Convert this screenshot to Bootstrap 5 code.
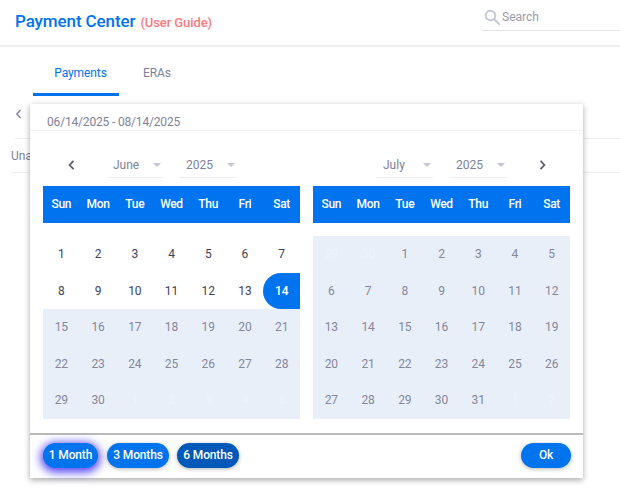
<!DOCTYPE html>
<html lang="en">
<head>
<meta charset="utf-8">
<title>Payment Center</title>
<link href="https://cdn.jsdelivr.net/npm/bootstrap@5.3.0/dist/css/bootstrap.min.css" rel="stylesheet">
<style>
html,body{height:100%;overflow:hidden}
body{font-family:Roboto,sans-serif;background:#fff;position:relative;width:620px;height:502px;color:#7e8299}
.topbar{height:47px;border-bottom:2px solid #eceef4;padding:0 0 0 15px}
.pc-head{padding-top:10px}
.pc-title{font-size:17px;letter-spacing:-.1px;font-weight:500;color:#0073ee;line-height:22px}
.pc-guide{font-size:13px;letter-spacing:-.1px;font-weight:500;color:#f87b7e;margin-left:5px}
.search-box{width:138px;height:31px;border-bottom:1px solid #e1e3ec;gap:2px;padding:3px 0 0 2px;font-size:12px;color:#9a9ca8}
.tab-row{height:49px;padding-left:33px}
.tab-item{font-size:12px;letter-spacing:-.1px;line-height:52px;color:#7e8299;height:49px;text-align:center}
.tab-on{width:86px;padding-left:9px;color:#0073ee;border-bottom:3px solid #0073ee}
.tab-off{margin-left:24px}
.back-row{height:43px;border-bottom:1px solid #eceef4;margin-left:15px;padding-top:13px}
.una-row{height:34px;border-bottom:1px solid #eceef4;margin-left:11px;font-size:12px;line-height:34px}
.picker{position:absolute;left:30px;top:104px;width:553px;height:374px;background:#fff;box-shadow:0 2px 6px rgba(0,0,0,.35)}
.range-row{height:27px;border-bottom:1px solid #f3f4f7;padding:10px 0 0 17px;font-size:12px;letter-spacing:-.17px;line-height:16px;color:#7e8299}
.cal-wrap{padding:0 13px;gap:13px;height:302px}
.cal{width:257px}
.cal-nav{height:55px;position:relative}
.sel-fake{position:absolute;top:21px;height:26px;border-bottom:1px solid #eceef4;font-size:12px;line-height:27px;color:#7e8299;width:56px;padding-left:6px}
.sel-fake::after{content:"";position:absolute;right:2px;top:11px;border-left:4px solid transparent;border-right:4px solid transparent;border-top:4px solid #c4c6d0}
.nav-arrow{position:absolute;top:29px}
.head-row{display:grid;grid-template-columns:repeat(7,1fr);height:37px;background:#0073ee;color:#fff;font-size:12px;letter-spacing:-.3px;font-weight:500;line-height:36px;text-align:center;margin-bottom:13px}
.day-grid{display:grid;grid-template-columns:repeat(7,1fr);grid-template-rows:repeat(5,36.6px);font-size:12px;letter-spacing:-.1px;text-align:center;line-height:36px}
.dcell{color:#3f4254}
.dsel{background:#e8eff9;color:#85879b}
.dout{background:#e8eff9;color:#eff2fb}
.dend{background:#0073ee;color:#fff;font-weight:500;border-radius:18px 0 0 18px}
.foot-row{height:45px;border-top:2px solid #b9b9b9;padding:8px 12px 0 13px;gap:9px}
.pill{height:25px;border:0;border-radius:13px;background:#0073ee;color:#fff;font-size:12px;letter-spacing:-.15px;font-weight:500;line-height:22px;padding:0 0 2px;box-shadow:0 1px 4px rgba(0,0,0,.3);text-align:center}
.pill-a{width:55px;box-shadow:0 2px 10px 2px #4a3cf5}
.pill-b{width:62px}
.pill-c{width:62px;background:#0058b8;margin-left:-1px}
.pill-ok{width:50px;margin-left:auto}
</style>
</head>
<body>
<div class="topbar d-flex justify-content-between align-items-start">
  <div class="d-flex align-items-baseline pc-head"><span class="pc-title">Payment Center</span><span class="pc-guide">(User Guide)</span></div>
  <div class="search-box d-flex align-items-center">
    <svg width="16" height="16" viewBox="0 0 16 16" fill="none" stroke="#c6c9d2" stroke-width="2"><circle cx="6.5" cy="6.5" r="4.8"/><path d="M10 10l5 5" stroke-linecap="round"/></svg>
    <span>Search</span>
  </div>
</div>
<div class="tab-row d-flex">
  <div class="tab-item tab-on">Payments</div>
  <div class="tab-item tab-off">ERAs</div>
</div>
<div class="back-row"><svg width="7" height="10" viewBox="0 0 7 10" fill="none" stroke="#7e8299" stroke-width="1.4" class="d-block"><path d="M5.5 1 1.8 5l3.7 4"/></svg></div>
<div class="una-row">Unapplied</div>

<div class="picker">
  <div class="range-row">06/14/2025 - 08/14/2025</div>
  <div class="cal-wrap d-flex">
    <div class="cal">
      <div class="cal-nav">
        <svg class="nav-arrow" style="left:24px" width="8" height="10" viewBox="0 0 8 10" fill="none" stroke="#5f6168" stroke-width="1.8"><path d="M6.5.8 2.6 5l3.9 4.2"/></svg>
        <div class="sel-fake" style="left:64px">June</div>
        <div class="sel-fake" style="left:137px;width:57px">2025</div>
      </div>
      <div class="head-row"><span>Sun</span><span>Mon</span><span>Tue</span><span>Wed</span><span>Thu</span><span>Fri</span><span>Sat</span></div>
      <div class="day-grid">
        <span class="dcell">1</span><span class="dcell">2</span><span class="dcell">3</span><span class="dcell">4</span><span class="dcell">5</span><span class="dcell">6</span><span class="dcell">7</span>
        <span class="dcell">8</span><span class="dcell">9</span><span class="dcell">10</span><span class="dcell">11</span><span class="dcell">12</span><span class="dcell">13</span><span class="dend">14</span>
        <span class="dsel">15</span><span class="dsel">16</span><span class="dsel">17</span><span class="dsel">18</span><span class="dsel">19</span><span class="dsel">20</span><span class="dsel">21</span>
        <span class="dsel">22</span><span class="dsel">23</span><span class="dsel">24</span><span class="dsel">25</span><span class="dsel">26</span><span class="dsel">27</span><span class="dsel">28</span>
        <span class="dsel">29</span><span class="dsel">30</span><span class="dout">1</span><span class="dout">2</span><span class="dout">3</span><span class="dout">4</span><span class="dout">5</span>
      </div>
    </div>
    <div class="cal">
      <div class="cal-nav">
        <div class="sel-fake" style="left:64px">July</div>
        <div class="sel-fake" style="left:137px;width:57px">2025</div>
        <svg class="nav-arrow" style="left:226px" width="8" height="10" viewBox="0 0 8 10" fill="none" stroke="#5f6168" stroke-width="1.8"><path d="M1.5.8 5.4 5 1.5 9.2"/></svg>
      </div>
      <div class="head-row"><span>Sun</span><span>Mon</span><span>Tue</span><span>Wed</span><span>Thu</span><span>Fri</span><span>Sat</span></div>
      <div class="day-grid">
        <span class="dout">29</span><span class="dout">30</span><span class="dsel">1</span><span class="dsel">2</span><span class="dsel">3</span><span class="dsel">4</span><span class="dsel">5</span>
        <span class="dsel">6</span><span class="dsel">7</span><span class="dsel">8</span><span class="dsel">9</span><span class="dsel">10</span><span class="dsel">11</span><span class="dsel">12</span>
        <span class="dsel">13</span><span class="dsel">14</span><span class="dsel">15</span><span class="dsel">16</span><span class="dsel">17</span><span class="dsel">18</span><span class="dsel">19</span>
        <span class="dsel">20</span><span class="dsel">21</span><span class="dsel">22</span><span class="dsel">23</span><span class="dsel">24</span><span class="dsel">25</span><span class="dsel">26</span>
        <span class="dsel">27</span><span class="dsel">28</span><span class="dsel">29</span><span class="dsel">30</span><span class="dsel">31</span><span class="dout">1</span><span class="dout">2</span>
      </div>
    </div>
  </div>
  <div class="foot-row d-flex">
    <button class="btn pill pill-a">1 Month</button>
    <button class="btn pill pill-b">3 Months</button>
    <button class="btn pill pill-c">6 Months</button>
    <button class="btn pill pill-ok">Ok</button>
  </div>
</div>
<script src="https://cdn.jsdelivr.net/npm/bootstrap@5.3.0/dist/js/bootstrap.bundle.min.js"></script>
</body>
</html>
